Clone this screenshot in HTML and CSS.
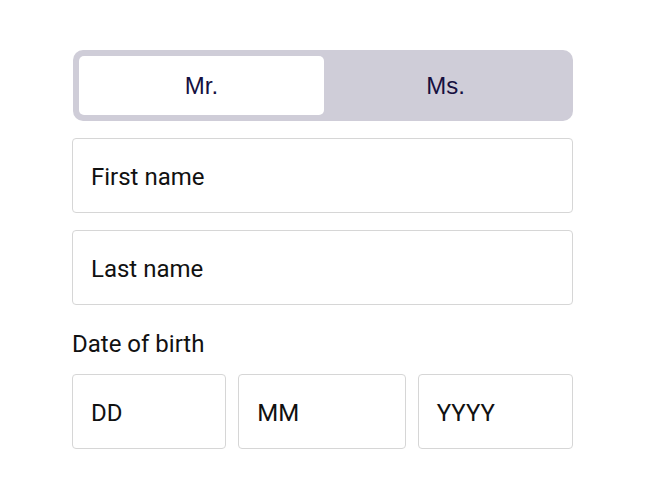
FILE: index.html
```html
<!DOCTYPE html>
<html>
<head>
<meta charset="utf-8">
<link rel="stylesheet" href="styles.css">
</head>
<body>
<form class="form">
  <div class="toggle">
    <button type="button" class="seg active">Mr.</button>
    <button type="button" class="seg">Ms.</button>
  </div>
  <div class="field">First name</div>
  <div class="field">Last name</div>
  <div class="label">Date of birth</div>
  <div class="dob">
    <div class="field">DD</div>
    <div class="field">MM</div>
    <div class="field">YYYY</div>
  </div>
</form>
</body>
</html>
```
FILE: styles.css
```css
html, body { margin: 0; padding: 0; background: #fff; }
body { font-family: Roboto, "Liberation Sans", sans-serif; }
.form {
  width: 501px;
  margin: 50px 0 0 72px;
  display: flex;
  flex-direction: column;
}
.toggle {
  margin-left: 1px;
  height: 71px;
  box-sizing: border-box;
  background: #cfcdd8;
  border-radius: 10px;
  padding: 6px;
  display: flex;
}
.seg {
  flex: 1;
  border: none;
  background: transparent;
  border-radius: 5px;
  font-family: "Liberation Sans", Arial, sans-serif;
  font-size: 24px;
  color: #161040;
  padding: 0;
  margin: 0;
}
.seg.active { background: #fff; flex: 0 0 245px; }
.field {
  box-sizing: border-box;
  height: 75px;
  border: 1px solid #d6d6d6;
  border-radius: 4px;
  display: flex;
  align-items: center;
  padding: 2px 0 0 18px;
  font-size: 24px;
  color: #111;
  margin-top: 17px;
}
.label {
  font-size: 24px;
  color: #111;
  margin-top: 25px;
  line-height: 28px;
}
.dob {
  display: grid;
  grid-template-columns: 154fr 167fr 155fr;
  gap: 12px;
  margin-top: 16px;
}
.dob .field { margin-top: 0; }
```
